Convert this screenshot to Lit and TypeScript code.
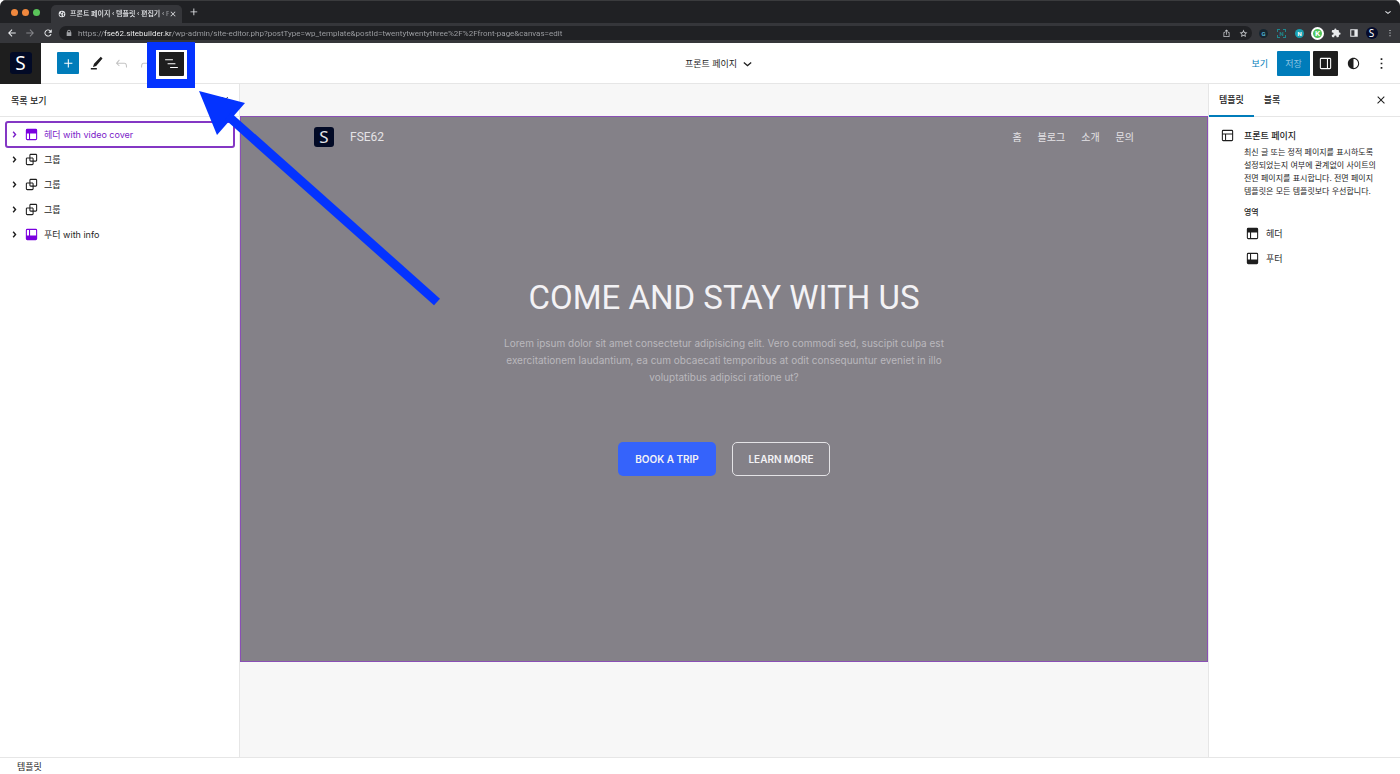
import { LitElement, html, css, svg } from "lit";
import { customElement, property, state } from "lit/decorators.js";
import { classMap } from "lit/directives/class-map.js";

const ICONS: Record<string, string> = {
  header:
    "M18.5 10.5H10v8h8a.5.5 0 00.5-.5v-7.5zm-10 0h-3V18a.5.5 0 00.5.5h2.5v-8zM6 4h12a2 2 0 012 2v12a2 2 0 01-2 2H6a2 2 0 01-2-2V6a2 2 0 012-2z",
  footer:
    "M18 5.5h-8v8h8.5V6a.5.5 0 00-.5-.5zm-9.5 8h-3V6a.5.5 0 01.5-.5h2.5v8zM6 4h12a2 2 0 012 2v12a2 2 0 01-2 2H6a2 2 0 01-2-2V6a2 2 0 012-2z",
  layout:
    "M18 5.5H6a.5.5 0 00-.5.5v3h13V6a.5.5 0 00-.5-.5zm.5 5H10v8h8a.5.5 0 00.5-.5v-7.5zm-10 0h-3V18a.5.5 0 00.5.5h2.5v-8zM6 4h12a2 2 0 012 2v12a2 2 0 01-2 2H6a2 2 0 01-2-2V6a2 2 0 012-2z",
  group:
    "M18 4h-7c-1.1 0-2 .9-2 2v3H6c-1.1 0-2 .9-2 2v7c0 1.1.9 2 2 2h7c1.1 0 2-.9 2-2v-3h3c1.1 0 2-.9 2-2V6c0-1.1-.9-2-2-2zm-4.5 14c0 .3-.2.5-.5.5H6c-.3 0-.5-.2-.5-.5v-7c0-.3.2-.5.5-.5h3V13c0 1.1.9 2 2 2h2.5v3zm0-4.5H11c-.3 0-.5-.2-.5-.5v-2.5H13c.3 0 .5.2.5.5v2.5zm5-.5c0 .3-.2.5-.5.5h-3V11c0-1.1-.9-2-2-2h-2.5V6c0-.3.2-.5.5-.5h7c.3 0 .5.2.5.5v7z",
  list: "M3 6h11v1.5H3V6Zm3.5 5.5h11V13h-11v-1.5ZM21 17H10v1.5h11V17Z",
  undo: "M18.3 11.7c-.6-.6-1.4-.9-2.3-.9H6.7l2.9-3.3-1.1-1-4.5 5L8.5 16l1-1-2.7-2.7H16c.5 0 .9.2 1.3.5 1 1 1 3.4 1 4.5v.3h1.5v-.2c0-1.5 0-4.3-1.5-5.7z",
  redo: "M15.6 6.5l-1.1 1 2.9 3.3H8c-.9 0-1.7.3-2.3.9-1.4 1.5-1.4 4.2-1.4 5.6v.2h1.5v-.3c0-1.1 0-3.5 1-4.5.3-.3.7-.5 1.3-.5h9.2L14.5 15l1.1 1.1 4.6-4.6-4.6-5z",
  edit: "m20.500 5-2.500-2.500-9.500 10-1.500 4.500 4.500-1.500L20.500 5Zm-8 13.500H4V20.500h8.500v-2Z",
  plus: "M11 12.500V17.500H12.500V12.500H17.500V11H12.500V6H11V11H6V12.500H11Z",
  styles:
    "M12 4c-4.4 0-8 3.600-8 8s3.600 8 8 8 8-3.600 8-8-3.600-8-8-8zm0 14.500v-13c3.600 0 6.500 2.900 6.500 6.500s-2.900 6.500-6.500 6.500z",
  drawer:
    "M18 4H6c-1.1 0-2 .9-2 2v12c0 1.1.9 2 2 2h12c1.1 0 2-.9 2-2V6c0-1.1-.9-2-2-2zm-4 14.5H6c-.3 0-.5-.2-.5-.5V6c0-.3.2-.5.5-.5h8v13zm4.5-.5c0 .3-.2.5-.5.5h-2.500v-13H18c.3 0 .5.2.5.5v12z",
  close:
    "M13.400 11.900l5.900-6-1.400-1.400-5.900 6-5.900-6-1.400 1.400 5.900 6-6.200 6.300 1.400 1.400 6.200-6.300 6.200 6.300 1.400-1.400z",
  more: "M13.200 19.500h-2.400v-2.400h2.400zM13.200 13.200h-2.400v-2.400h2.400zM13.200 6.900h-2.400v-2.400h2.400z",
  right:
    "M10.8622 7.54053L14.7805 12.0286L10.8622 16.5167L9.32327 15.2405L12.1 12.0286L9.32327 8.81672Z",
  down: "M17.800 11.300L12 16.200l-5.800-4.900 1.200-1.500L12 13.600l4.600-3.800z",
  back: "M21 10.700H7l6-6-1.700-1.700L2.500 12l8.800 9 1.700-1.700-6-6h14z",
  forward: "M3 10.700h14l-6-6 1.700-1.700L21.500 12l-8.800 9-1.700-1.700 6-6H3z",
  reload:
    "M18 6a8.500 8.500 0 1 0 2.300 8.200h-2.600A6 6 0 1 1 16.200 7.800L12.800 11.200H21V3z",
  lock: "M17.500 9.500V8a5.500 5.500 0 0 0-11 0v1.500H5V21h14V9.500zM9 9.500V8a3 3 0 0 1 6 0v1.500z",
  share:
    "M12 1 7 6l1.500 1.500L11 5v10h2V5l2.500 2.500L17 6zM4 8.500v13h16v-13h-4.500v2H18v9H6v-9h2.500v-2z",
  star: "M12 1.500l3.100 6.900 7.400.8-5.500 5 1.500 7.300L12 17.800l-6.500 3.700 1.500-7.300-5.500-5 7.400-.8zM12 7l-1.600 3.500-3.800.4 2.800 2.600-.8 3.800L12 15.400l3.400 1.900-.8-3.800 2.800-2.600-3.800-.4z",
  puzzle:
    "M20.500 11H19V7a2 2 0 0 0-2-2h-4V3.500a2.500 2.500 0 0 0-5 0V5H4a2 2 0 0 0-2 2v3.800h1.500a2.700 2.700 0 0 1 0 5.400H2V20a2 2 0 0 0 2 2h3.800v-1.500a2.700 2.700 0 0 1 5.400 0V22H17a2 2 0 0 0 2-2v-4h1.500a2.500 2.500 0 0 0 0-5z",
  sidebar: "M3 3h18v18H3zM5.500 5.500v13H13v-13z",
  globe:
    "M12 2a10 10 0 1 0 0 20 10 10 0 0 0 0-20zm-1 2.200 3 2.800-2.500 3H9l-1.500 2 3.500 2.500v4.800A8 8 0 0 1 4 12l2.500.5L9 7.500zM17 7l2.500 3.500-3 2.500 2 2.500-3 3-1.500-4 1-3z",
};

@customElement("ui-icon")
export class UiIcon extends LitElement {
  static styles = css`
    :host {
      display: block;
      flex: none;
      width: var(--icon-size, 17px);
      height: var(--icon-size, 17px);
    }
    .glyph {
      display: block;
      width: 100%;
      height: 100%;
      fill: currentColor;
      fill-rule: evenodd;
    }
  `;
  @property() name = "";
  render() {
    return html`<svg class="glyph" viewBox="0 0 24 24" aria-hidden="true">
      ${svg`<path d=${ICONS[this.name] ?? ""}></path>`}
    </svg>`;
  }
}

@customElement("browser-chrome")
export class BrowserChrome extends LitElement {
  static styles = css`
    :host {
      display: block;
      background: #202124;
      color: #e8eaed;
      font-family: Roboto, "Noto Sans CJK KR", sans-serif;
      font-size: 8px;
    }
    button {
      appearance: none;
      border: 0;
      margin: 0;
      padding: 0;
      background: none;
      color: inherit;
      font: inherit;
      display: grid;
      place-items: center;
    }
    .tabs {
      display: flex;
      align-items: center;
      height: 23px;
      padding: 0 6px 0 11px;
      border-top: 1px solid #3a3b3d;
      box-sizing: border-box;
    }
    .lights {
      display: flex;
      gap: 4px;
    }
    .light {
      width: 7px;
      height: 7px;
      border-radius: 50%;
      background: #f0883e;
    }
    .light.go {
      background: #5ac45a;
    }
    .tab {
      --icon-size: 8px;
      display: flex;
      align-items: center;
      align-self: flex-end;
      width: 131px;
      height: 18px;
      margin-left: 11px;
      padding: 0 5px 0 7px;
      box-sizing: border-box;
      border-radius: 5px 5px 0 0;
      background: #35363a;
      font-size: 7px;
      font-weight: 500;
    }
    .tab-title {
      flex: 1;
      min-width: 0;
      margin-left: 4px;
      white-space: nowrap;
      mask-image: linear-gradient(90deg, #000 90%, rgba(0, 0, 0, 0.3));
    }
    .new {
      --icon-size: 14px;
      margin-left: 5px;
    }
    .menu {
      --icon-size: 12px;
      margin-left: auto;
    }
    .bar {
      --icon-size: 10px;
      display: flex;
      align-items: center;
      height: 20px;
      padding: 0 7px;
      background: #35363a;
    }
    .nav {
      display: flex;
      gap: 8px;
      margin-right: 6px;
    }
    .nav .off {
      color: #85868a;
    }
    .pill {
      --icon-size: 8px;
      flex: 1;
      display: flex;
      align-items: center;
      height: 14px;
      padding: 0 0 0 6px;
      border-radius: 7px;
      background: #202124;
      color: #a0a2a6;
    }
    .pill button {
      --icon-size: 9px;
      width: 17px;
      color: #c4c6ca;
    }
    .url {
      flex: 1;
      min-width: 0;
      height: 12px;
      margin-left: 5px;
      padding: 0;
      border: 0;
      outline: 0;
      font: inherit;
      color: #a0a2a6;
      -webkit-text-fill-color: transparent;
      background: linear-gradient(
        90deg,
        #a0a2a6 26px,
        #ffffff 26px,
        #ffffff 94px,
        #a0a2a6 94px
      );
      -webkit-background-clip: text;
      background-clip: text;
    }
    .tools {
      display: flex;
      align-items: center;
      margin-left: 3px;
    }
    .tools button {
      width: 17px;
      height: 14px;
      margin-right: 1px;
    }
    .tools button:last-child {
      margin-right: -5px;
    }
    .badge {
      display: grid;
      place-items: center;
      width: 9px;
      height: 9px;
      border-radius: 50%;
      font-size: 6px;
      line-height: 9px;
      font-weight: 700;
    }
    .gt {
      background: #17252f;
      color: #4fb4d8;
    }
    .dash {
      color: #20878f;
      border: 1px dashed #20878f;
      border-radius: 0;
      width: 7px;
      height: 7px;
      line-height: 7px;
    }
    .round {
      background: #1a9fb0;
      color: #fff;
    }
    .k {
      width: 9px;
      height: 9px;
      border: 2px solid #fff;
      background: #50c55c;
      color: #fff;
      font-size: 8px;
    }
    .s {
      width: 12px;
      height: 12px;
      background: #050b2c;
      color: #fff;
      font: 400 10px/12px "Noto Sans", sans-serif;
    }
  `;
  render() {
    return html`
      <div class="tabs">
        <div class="lights">
          <span class="light"></span><span class="light"></span
          ><span class="light go"></span>
        </div>
        <div class="tab">
          <ui-icon name="globe"></ui-icon>
          <span class="tab-title">프론트 페이지 ‹ 템플릿 ‹ 편집기 ‹ F</span>
          <button aria-label="탭 닫기"><ui-icon name="close"></ui-icon></button>
        </div>
        <button class="new" aria-label="새 탭">
          <ui-icon name="plus"></ui-icon>
        </button>
        <button class="menu" aria-label="탭 검색">
          <ui-icon name="down"></ui-icon>
        </button>
      </div>
      <div class="bar">
        <div class="nav">
          <button aria-label="뒤로"><ui-icon name="back"></ui-icon></button>
          <button class="off" aria-label="앞으로">
            <ui-icon name="forward"></ui-icon>
          </button>
          <button aria-label="새로고침"><ui-icon name="reload"></ui-icon></button>
        </div>
        <div class="pill">
          <ui-icon name="lock"></ui-icon>
          <input
            class="url"
            type="text"
            aria-label="주소"
            value="https://fse62.sitebuilder.kr/wp-admin/site-editor.php?postType=wp_template&postId=twentytwentythree%2F%2Ffront-page&canvas=edit"
          />
          <button aria-label="공유"><ui-icon name="share"></ui-icon></button>
          <button aria-label="북마크"><ui-icon name="star"></ui-icon></button>
        </div>
        <div class="tools">
          <button><span class="badge gt">G</span></button>
          <button><span class="badge dash">N</span></button>
          <button><span class="badge round">N</span></button>
          <button><span class="badge k">K</span></button>
          <button aria-label="확장 프로그램"><ui-icon name="puzzle"></ui-icon></button>
          <button aria-label="사이드 패널"><ui-icon name="sidebar"></ui-icon></button>
          <button><span class="badge s">S</span></button>
          <button aria-label="메뉴"><ui-icon name="more"></ui-icon></button>
        </div>
      </div>
    `;
  }
}

interface Block {
  icon: string;
  label: string;
  part?: boolean;
}

@customElement("app-root")
export class AppRoot extends LitElement {
  static styles = css`
    :host {
      display: flex;
      flex-direction: column;
      position: relative;
      min-height: 100vh;
      box-sizing: border-box;
      overflow: hidden;
      border-radius: 6px;
      background: #fff;
      color: #1e1e1e;
      font-family: Inter, "Noto Sans CJK KR", sans-serif;
      font-size: 9px;
      line-height: 13px;
    }
    button {
      appearance: none;
      border: 0;
      margin: 0;
      padding: 0;
      background: none;
      color: inherit;
      font: inherit;
      display: flex;
      align-items: center;
      justify-content: center;
    }
    a {
      color: inherit;
      text-decoration: none;
    }
    h1,
    h2,
    h3,
    p,
    ul {
      margin: 0;
      padding: 0;
      font: inherit;
      list-style: none;
    }
    .logo {
      display: grid;
      place-items: center;
      width: 22px;
      height: 22px;
      border-radius: 3px;
      background: #020a26;
      color: #fff;
      font: 400 19px/22px "Noto Sans", sans-serif;
    }
    .logo.small {
      width: 20px;
      height: 20px;
      color: #e4e3e6;
      font-size: 17px;
      line-height: 20px;
    }
    .topbar {
      display: flex;
      align-items: center;
      height: 41px;
      border-bottom: 1px solid #e6e6e6;
      box-sizing: border-box;
    }
    .controls {
      flex: 1;
      display: grid;
      grid-template-columns: 1fr auto 1fr;
      align-items: center;
    }
    .left {
      display: flex;
      align-items: center;
    }
    .home {
      display: grid;
      place-items: center;
      width: 41px;
      height: 41px;
      background: #1e1e1e;
    }
    .tool {
      width: 25px;
      height: 25px;
      border-radius: 1px;
    }
    .tool.faded {
      color: #c4c4c4;
    }
    .tool.dark {
      background: #1e1e1e;
      color: #fff;
    }
    .add {
      width: 22px;
      height: 22px;
      margin: 0 5px 0 16px;
      border-radius: 1px;
      background: #007cba;
      color: #fff;
    }
    .doc {
      gap: 2px;
    }
    .right {
      display: flex;
      align-items: center;
      justify-content: flex-end;
      gap: 3px;
      padding-right: 6px;
    }
    .view {
      margin-right: 6px;
      color: #007cba;
    }
    .save {
      width: 33px;
      height: 25px;
      border-radius: 1px;
      background: #007cba;
      color: #8cc4e2;
    }
    .work {
      flex: 1;
      display: grid;
      grid-template-columns: 240px 1fr 192px;
    }
    .list {
      border-right: 1px solid #e6e6e6;
      box-sizing: border-box;
    }
    .list-head {
      --icon-size: 10px;
      display: flex;
      align-items: center;
      justify-content: space-between;
      height: 33px;
      padding: 0 9px 0 11px;
      border-bottom: 1px solid #e6e6e6;
      box-sizing: border-box;
      font-weight: 500;
    }
    .tree {
      padding: 5px 5px 0 6px;
    }
    .row {
      width: 100%;
      height: 25px;
      justify-content: flex-start;
      border-radius: 2px;
    }
    .part {
      color: #7a00df;
    }
    .name {
      margin-left: 4px;
    }
    .row.selected {
      color: #7a20c8;
      outline: 2px solid #8437c4;
      outline-offset: -1px;
    }
    .stage {
      display: flex;
      flex-direction: column;
      background: #f7f7f7;
      padding: 32px 0 95px;
    }
    .hero {
      flex: 1;
      display: flex;
      flex-direction: column;
      border: 1px solid #8a4fb5;
      background: #848188;
      color: #f3f2f5;
      text-align: center;
    }
    .site {
      display: flex;
      align-items: center;
      gap: 16px;
      padding: 10px 73px;
      color: #e4e3e6;
      font-size: 12px;
      line-height: 20px;
    }
    .site-name {
      font-family: Roboto, sans-serif;
    }
    .links {
      display: flex;
      gap: 16px;
      margin-left: auto;
      font-size: 10px;
    }
    .copy {
      display: flex;
      flex-direction: column;
      align-items: center;
      padding-top: 120px;
    }
    .title {
      font-family: Roboto, sans-serif;
      font-size: 33px;
      line-height: 42px;
    }
    .lead {
      max-width: 456px;
      margin-top: 16px;
      color: #bab8bd;
      font-size: 10px;
      line-height: 17px;
    }
    .actions {
      display: flex;
      gap: 16px;
      margin-top: 56px;
    }
    .cta {
      width: 98px;
      height: 34px;
      border-radius: 5px;
      background: #3563fb;
      font-size: 10px;
      font-weight: 600;
      box-sizing: border-box;
    }
    .cta.outline {
      border: 1px solid #e4e3e6;
      background: none;
    }
    .settings {
      border-left: 1px solid #e6e6e6;
      box-sizing: border-box;
    }
    .tabs {
      --icon-size: 12px;
      display: flex;
      height: 33px;
      padding-right: 13px;
      border-bottom: 1px solid #e6e6e6;
      box-sizing: border-box;
      font-weight: 500;
    }
    .tab {
      height: 33px;
      padding: 0 10px;
      box-sizing: border-box;
      border-bottom: 2px solid transparent;
    }
    .tab.active {
      border-bottom-color: #007cba;
    }
    .close {
      margin-left: auto;
    }
    .card {
      display: grid;
      grid-template-columns: auto 1fr;
      gap: 8px;
      padding: 10px 16px 0 10px;
    }
    .card-name {
      font-weight: 500;
      line-height: 17px;
    }
    .about {
      margin-top: 2px;
      font-size: 8px;
      word-break: keep-all;
    }
    .areas {
      margin-top: 8px;
      font-size: 8px;
      font-weight: 500;
    }
    .area {
      width: 100%;
      height: 25px;
      justify-content: flex-start;
      gap: 5px;
    }
    .area-list {
      margin-top: 2px;
    }
    .crumbs {
      display: flex;
      align-items: center;
      height: 17px;
      padding-left: 17px;
      border-top: 1px solid #e6e6e6;
      box-sizing: border-box;
    }
    .callout {
      position: absolute;
      top: 0;
      left: 0;
      width: 460px;
      height: 320px;
      pointer-events: none;
    }
  `;

  @state() private selected = 0;

  private blocks: Block[] = [
    { icon: "header", label: "헤더 with video cover", part: true },
    { icon: "group", label: "그룹" },
    { icon: "group", label: "그룹" },
    { icon: "group", label: "그룹" },
    { icon: "footer", label: "푸터 with info", part: true },
  ];

  render() {
    return html`
      <browser-chrome></browser-chrome>
      <header class="topbar">
        <a class="home" href="#" aria-label="대시보드"
          ><span class="logo">S</span></a
        >
        <div class="controls">
          <div class="left">
            <button class="add" aria-label="블록 추가">
              <ui-icon name="plus"></ui-icon>
            </button>
            <button class="tool" aria-label="도구">
              <ui-icon name="edit"></ui-icon>
            </button>
            <button class="tool faded" aria-label="되돌리기">
              <ui-icon name="undo"></ui-icon>
            </button>
            <button class="tool faded" aria-label="다시 실행">
              <ui-icon name="redo"></ui-icon>
            </button>
            <button class="tool dark" aria-label="목록 보기">
              <ui-icon name="list"></ui-icon>
            </button>
          </div>
          <button class="doc">
            <span>프론트 페이지</span><ui-icon name="down"></ui-icon>
          </button>
          <div class="right">
            <a class="view" href="#">보기</a>
            <button class="save">저장</button>
            <button class="tool dark" aria-label="설정">
              <ui-icon name="drawer"></ui-icon>
            </button>
            <button class="tool" aria-label="스타일">
              <ui-icon name="styles"></ui-icon>
            </button>
            <button class="tool" aria-label="옵션">
              <ui-icon name="more"></ui-icon>
            </button>
          </div>
        </div>
      </header>
      <div class="work">
        <aside class="list">
          <div class="list-head">
            <h2>목록 보기</h2>
            <button aria-label="닫기"><ui-icon name="close"></ui-icon></button>
          </div>
          <ul class="tree">
            ${this.blocks.map(
              (b, i) => html`<li>
                <button
                  class=${classMap({ row: true, selected: i === this.selected })}
                  @click=${() => (this.selected = i)}
                >
                  <ui-icon name="right"></ui-icon>
                  <ui-icon
                    class=${classMap({ part: !!b.part })}
                    name=${b.icon}
                  ></ui-icon>
                  <span class="name">${b.label}</span>
                </button>
              </li>`
            )}
          </ul>
        </aside>
        <main class="stage">
          <section class="hero">
            <div class="site">
              <span class="logo small">S</span>
              <a class="site-name" href="#">FSE62</a>
              <nav class="links">
                <a href="#">홈</a><a href="#">블로그</a><a href="#">소개</a
                ><a href="#">문의</a>
              </nav>
            </div>
            <div class="copy">
              <h1 class="title">COME AND STAY WITH US</h1>
              <p class="lead">
                Lorem ipsum dolor sit amet consectetur adipisicing elit. Vero
                commodi sed, suscipit culpa est exercitationem laudantium, ea
                cum obcaecati temporibus at odit consequuntur eveniet in illo
                voluptatibus adipisci ratione ut?
              </p>
              <div class="actions">
                <button class="cta">BOOK A TRIP</button>
                <button class="cta outline">LEARN MORE</button>
              </div>
            </div>
          </section>
        </main>
        <aside class="settings">
          <div class="tabs">
            <button class="tab active">템플릿</button>
            <button class="tab">블록</button>
            <button class="close" aria-label="설정 닫기">
              <ui-icon name="close"></ui-icon>
            </button>
          </div>
          <div class="card">
            <ui-icon name="layout"></ui-icon>
            <div>
              <h2 class="card-name">프론트 페이지</h2>
              <p class="about">
                최신 글 또는 정적 페이지를 표시하도록 설정되었는지 여부에
                관계없이 사이트의 전면 페이지를 표시합니다. 전면 페이지 템플릿은
                모든 템플릿보다 우선합니다.
              </p>
              <h3 class="areas">영역</h3>
              <div class="area-list">
                <button class="area"><ui-icon name="header"></ui-icon>헤더</button>
                <button class="area"><ui-icon name="footer"></ui-icon>푸터</button>
              </div>
            </div>
          </div>
        </aside>
      </div>
      <footer class="crumbs">템플릿</footer>
      <svg class="callout" viewBox="0 0 460 320" aria-hidden="true">
        <path
          fill="#0433ff"
          fill-rule="evenodd"
          d="M147 42H195V88H147ZM156 50V79H187V50Z"
        ></path>
        <path
          fill="none"
          stroke="#fff"
          stroke-width="2"
          d="M157 51H186V78H157Z"
        ></path>
        <path fill="#0433ff" d="M199 91 245 103 217 135Z"></path>
        <path stroke="#0433ff" stroke-width="9" d="M228 116 437 302"></path>
      </svg>
    `;
  }
}
